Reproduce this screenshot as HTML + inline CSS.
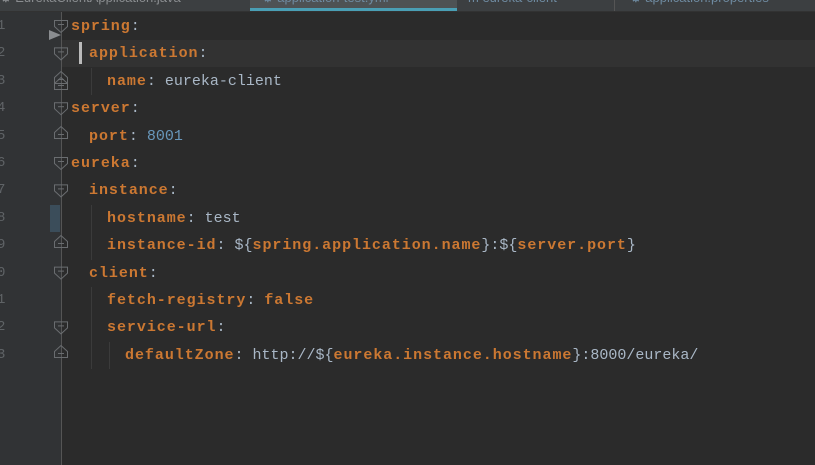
<!DOCTYPE html>
<html><head><meta charset="utf-8"><style>
body{margin:0;width:815px;height:465px;background:#2b2b2b;overflow:hidden;position:relative;font-family:"Liberation Mono",monospace;}
#tabs{position:absolute;left:0;top:0;width:815px;height:11px;background:#3c3f41;border-bottom:1px solid #323232;overflow:hidden}
.tab{position:absolute;top:-10px;height:16px;font:13px "Liberation Sans",sans-serif;color:#8a8d90;white-space:nowrap}
#gutter{position:absolute;left:0;top:12px;width:61px;height:453px;background:#313335;border-right:1px solid #505254}
.ln{position:absolute;left:-3px;font-size:14px;color:#5f6366;height:27.4px;line-height:27.4px}
.code{position:absolute;left:71px;font-size:15px;height:27.4px;line-height:27.4px;white-space:pre;color:#a9b7c6}
.k{color:#cc7832;font-weight:bold;letter-spacing:0.95px}
.n{color:#6897bb}
.g{position:absolute;width:1px;background:#3b3b3b}
</style></head><body>
<div id="tabs">
<div class="tab" style="left:0">⚙ EurekaClientApplication.java</div>
<div style="position:absolute;left:250px;top:0;width:207px;height:11px;background:#4e5254"></div>
<div style="position:absolute;left:250px;top:8px;width:207px;height:3px;background:#4a9fb5"></div>
<div class="tab" style="left:262px;color:#6e8aa0">⚙ application-test.yml</div>
<div class="tab" style="left:468px;color:#6e8aa0">m eureka-client</div>
<div style="position:absolute;left:614px;top:0;width:1px;height:11px;background:#555"></div>
<div class="tab" style="left:630px;color:#6e8aa0">⚙ application.properties</div>
</div>
<div id="gutter"></div>
<div style="position:absolute;left:62px;top:40px;width:753px;height:27px;background:#323232"></div>
<div style="position:absolute;left:50px;top:205px;width:10px;height:27px;background:#3b4d5a"></div>
<div style="position:absolute;left:79px;top:42px;width:3px;height:22px;background:#bbb"></div>
<div class="g" style="left:91px;top:68px;height:27px"></div>
<div class="g" style="left:91px;top:205px;height:55px"></div>
<div class="g" style="left:91px;top:287px;height:82px"></div>
<div class="g" style="left:109px;top:342px;height:27px"></div>
<svg style="position:absolute;left:0;top:0" width="815" height="465">
<g fill="none" stroke="#6a6d70" stroke-width="1">
<line x1="61.5" y1="12" x2="61.5" y2="465" stroke="#555"/>
<g id="d"><path d="M54.5 20.5h13v6l-6.5 6l-6.5-6z"/><line x1="58" y1="24.5" x2="64" y2="24.5"/></g>
<use href="#d" y="27.4"/><use href="#d" y="82.2"/><use href="#d" y="137"/><use href="#d" y="164.4"/><use href="#d" y="246.6"/><use href="#d" y="301.4"/>
<g id="u"><path d="M54.5 89.5h13v-6l-6.5-6l-6.5 6z"/><line x1="58" y1="85.5" x2="64" y2="85.5"/></g>
<use href="#u" y="-6"/><use href="#u" y="49"/><use href="#u" y="158"/><use href="#u" y="268"/>
</g>
<path d="M49 30l12 5l-12 5z" fill="#8a8d90"/>
</svg>
<div style="position:absolute;top:13px;left:0;width:815px">
<div class="ln" style="top:0">1</div><div class="ln" style="top:27.4px">2</div><div class="ln" style="top:54.8px">3</div><div class="ln" style="top:82.2px">4</div><div class="ln" style="top:109.6px">5</div><div class="ln" style="top:137px">6</div><div class="ln" style="top:164.4px">7</div><div class="ln" style="top:191.8px">8</div><div class="ln" style="top:219.2px">9</div><div class="ln" style="top:246.6px">0</div><div class="ln" style="top:274px">1</div><div class="ln" style="top:301.4px">2</div><div class="ln" style="top:328.8px">3</div>
<div class="code" style="top:0"><span class="k">spring</span>:</div>
<div class="code" style="top:27.4px">  <span class="k">application</span>:</div>
<div class="code" style="top:54.8px">    <span class="k">name</span>: eureka-client</div>
<div class="code" style="top:82.2px"><span class="k">server</span>:</div>
<div class="code" style="top:109.6px">  <span class="k">port</span>: <span class="n">8001</span></div>
<div class="code" style="top:137px"><span class="k">eureka</span>:</div>
<div class="code" style="top:164.4px">  <span class="k">instance</span>:</div>
<div class="code" style="top:191.8px">    <span class="k">hostname</span>: test</div>
<div class="code" style="top:219.2px">    <span class="k">instance-id</span>: ${<span class="k">spring.application.name</span>}:${<span class="k">server.port</span>}</div>
<div class="code" style="top:246.6px">  <span class="k">client</span>:</div>
<div class="code" style="top:274px">    <span class="k">fetch-registry</span>: <span class="k">false</span></div>
<div class="code" style="top:301.4px">    <span class="k">service-url</span>:</div>
<div class="code" style="top:328.8px">      <span class="k">defaultZone</span>: http://${<span class="k">eureka.instance.hostname</span>}:8000/eureka/</div>
</div>
</body></html>
